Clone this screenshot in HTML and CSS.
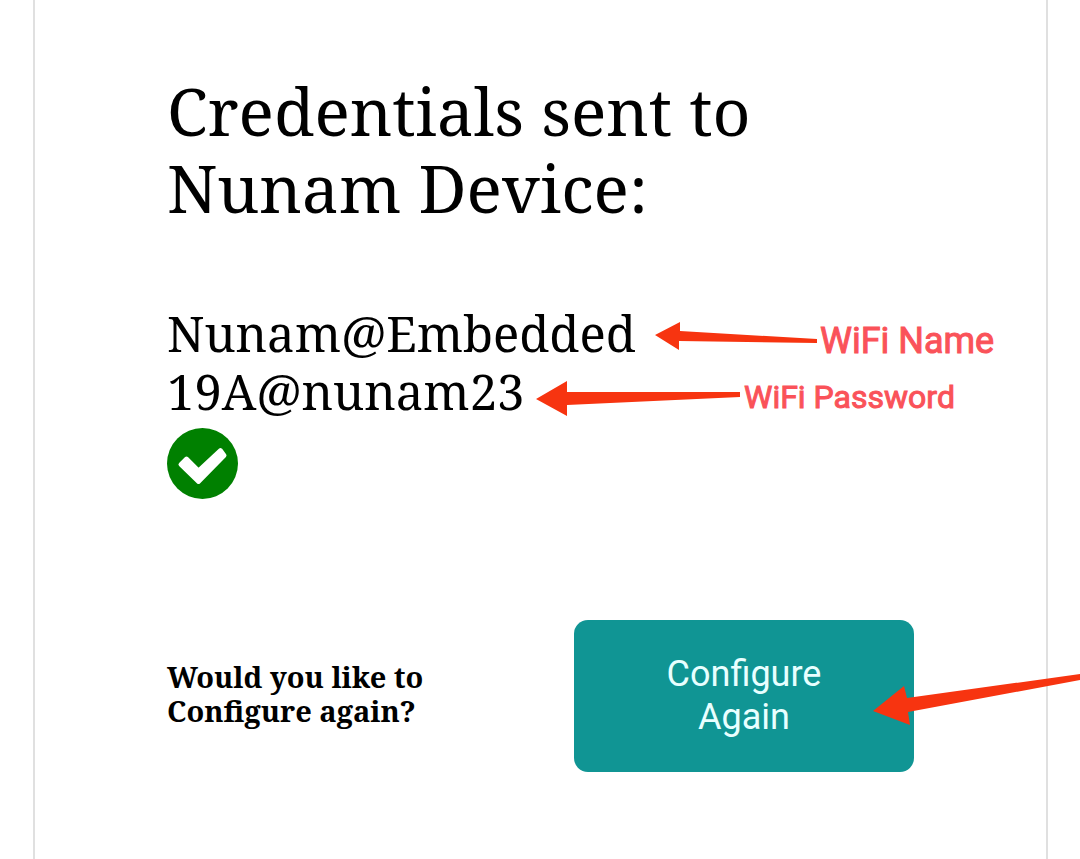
FILE: index.html
```html
<!DOCTYPE html>
<html lang="en">
<head>
<meta charset="utf-8">
<title>Credentials sent</title>
<link rel="stylesheet" href="styles.css">
</head>
<body>
<main class="card">
  <h1 class="title">Credentials sent to Nunam Device:</h1>
  <section class="credentials">
    <p class="credential">Nunam@Embedded<br>19A@nunam23</p>
    <svg class="check" viewBox="0 0 71 71" role="img" aria-label="Success"><circle cx="35.500" cy="35.500" r="35.500" fill="#008000"/><path fill="#fff" stroke="#fff" stroke-width="4" stroke-linejoin="round" d="M13.500 36.500L19.500 30.500L31.500 42.500L53.500 22L57.500 27.500L31.500 54Z"/></svg>
  </section>
  <section class="again">
    <p class="question">Would you like to Configure again?</p>
    <button class="configure" type="button">Configure Again</button>
  </section>
</main>
<svg class="arrows" width="1080" height="859" aria-hidden="true"><g fill="#f73410"><path d="M655 335L680 322V331L817 339V343L679 341V350Z"/><path d="M536 399L567 381V392L740 392V397L567 405V416Z"/><path d="M873 711L904 686L907 698L1080 674V680L908 712L910 725Z"/></g></svg>
<span class="note note-name">WiFi Name</span>
<span class="note note-password">WiFi Password</span>
</body>
</html>
```
FILE: styles.css
```css
* { box-sizing: border-box; }
body {
  position: relative;
  margin: 0;
  padding: 0 32px 0 33px;
  background: #fff;
  color: #000;
  font-family: "Noto Serif", "Droid Serif", "DejaVu Serif", serif;
  overflow-x: hidden;
}
.card {
  min-height: 100vh;
  padding: 72px 132px 88px;
  border: solid #e0e0e0;
  border-width: 0 2px;
}
.title { margin: 0; font-size: 66px; line-height: 77px; font-weight: 400; }
.credentials { margin-top: 78px; }
.credential { margin: 0; font-size: 49px; line-height: 58px; }
.check { display: block; width: 71px; height: 71px; margin-top: 8px; }
.again {
  display: grid;
  grid-template-columns: 1fr 340px;
  align-items: center;
  margin-top: 121px;
}
.question { width: 280px; margin: 0; padding-bottom: 4px; font-size: 29px; line-height: 34px; font-weight: 700; }
.configure {
  height: 152px;
  padding: 0 80px;
  border: 0;
  border-radius: 14px;
  background: #109594;
  color: #e8ffff;
  font: 36px/43px Roboto, sans-serif;
}
.arrows { position: absolute; top: 0; left: 0; pointer-events: none; }
.note { position: absolute; color: #fa5259; font-family: Roboto, sans-serif; white-space: nowrap; -webkit-text-stroke: 1px #fa5259; }
.note-name { left: 820px; top: 320px; font-size: 36px; line-height: 42px; }
.note-password { left: 744px; top: 378px; font-size: 32px; line-height: 38px; }
```
